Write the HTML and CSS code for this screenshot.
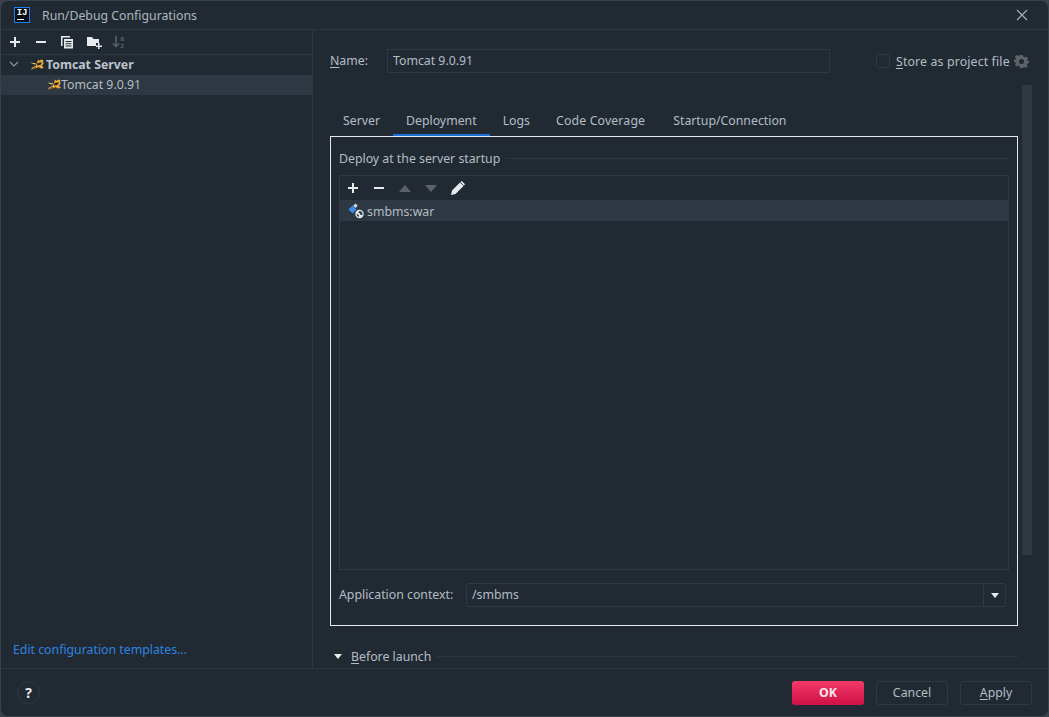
FILE: index.html
```html
<!DOCTYPE html>
<html lang="en">
<head>
<meta charset="utf-8">
<title>Run/Debug Configurations</title>
<link rel="stylesheet" href="styles.css">
</head>
<body>
<svg class="defs" width="0" height="0">
  <defs>
    <symbol id="cat" viewBox="0 0 14 11">
      <path fill="#e9a83c" d="M8 .5l1.500 1.300L11.500.5 13 1l.5 3.500-1.500 2.500 2 2-3 .5-2.500-1.500L6 9.500l-5 1 1-2 3.500-1.500 1.500-3z"/>
      <path fill="#23231a" d="M7.500 4l4.500-.7L10.500 6l-3.500.4zM1.500 9.500l4-1.300L7 9.500z"/>
      <path fill="#f4cb58" d="M0 3.500l6 .8-.8 1.500z"/>
    </symbol>
    <symbol id="plus" viewBox="0 0 12 12"><path fill="#e8ebee" d="M5 1h2v4h4v2H7v4H5V7H1V5h4z"/></symbol>
    <symbol id="minus" viewBox="0 0 12 12"><path fill="#e8ebee" d="M1 5h10v2H1z"/></symbol>
  </defs>
</svg>
<div class="window">
  <header class="titlebar">
    <span class="app-logo"><span class="logo-text">IJ</span><span class="logo-bar"></span></span>
    <span class="title">Run/Debug Configurations</span>
    <svg class="close" width="12" height="12" viewBox="0 0 12 12"><path d="M1 1l10 10M11 1L1 11" stroke="#a9b0b7" stroke-width="1.100" fill="none"/></svg>
  </header>
  <main class="main">
    <aside class="left">
      <div class="left-toolbar">
        <svg class="ico ico-add" width="12" height="12"><use href="#plus"/></svg>
        <svg class="ico" width="12" height="12"><use href="#minus"/></svg>
        <svg class="ico" width="14" height="14" viewBox="0 0 14 14"><path fill="#e8ebee" d="M1 1h9v1.500H2.500V11H1z"/><path fill="#e8ebee" fill-rule="evenodd" d="M4 4h9v9.500H4zm1.500 2v1H11.500V6zm0 2.200v1H11.500v-1zm0 2.200v1H11.500v-1z"/></svg>
        <svg class="ico ico-folder" width="15" height="14" viewBox="0 0 15 14"><path fill="#e8ebee" d="M0 2h5l1.500 2H12v4H9v3H0z"/><path fill="#e8ebee" d="M11 8h1.500v2.500H15V12h-2.500v2H11v-2H9v-1.500h2z"/></svg>
        <svg class="ico" width="14" height="14" viewBox="0 0 14 14"><path fill="#5c6268" d="M3.200 1h1.600v9l2-2 .9.900L4 12.500.3 8.900l.9-.9 2 2z"/><text class="az" x="8.500" y="6">a</text><text class="az" x="8.500" y="13">z</text></svg>
      </div>
      <div class="tree">
        <div class="tree-row tree-parent">
          <svg class="chev" width="10" height="6" viewBox="0 0 10 6"><path d="M1 1l4 4 4-4" stroke="#8a9097" stroke-width="1.200" fill="none"/></svg>
          <svg class="cat" width="14" height="11"><use href="#cat"/></svg>
          <span>Tomcat Server</span>
        </div>
        <div class="tree-row tree-child">
          <svg class="cat" width="14" height="11"><use href="#cat"/></svg>
          <span>Tomcat 9.0.91</span>
        </div>
      </div>
      <a class="templates">Edit configuration templates...</a>
    </aside>
    <section class="right">
      <div class="name-row">
        <label class="name-label"><u>N</u>ame:</label>
        <div class="name-field">Tomcat 9.0.91</div>
        <span class="checkbox"></span>
        <span class="store"><u>S</u>tore as project file</span>
        <svg class="gear" width="15" height="15" viewBox="0 0 15 15"><path fill="#5f6368" fill-rule="evenodd" d="M6 1h3l.4 1.800 1.300.6 1.600-1 1.800 2-1 1.500.5 1.300L15 6.500v2.500l-1.700.5-.5 1.300 1 1.500-1.800 1.800-1.600-1-1.300.6L9 14H6l-.4-1.800-1.300-.6-1.600 1L.9 10.800l1-1.500-.5-1.300L0 8.500V6l1.400-.5.500-1.300-1-1.500 1.800-1.800 1.600 1 1.300-.6zM7.500 5a2.500 2.500 0 1 0 0 5 2.500 2.500 0 0 0 0-5z"/></svg>
      </div>
      <div class="scrollbar"></div>
      <nav class="tabs">
        <span class="tab">Server</span>
        <span class="tab tab-active">Deployment</span>
        <span class="tab">Logs</span>
        <span class="tab tab-code">Code Coverage</span>
        <span class="tab">Startup/Connection</span>
      </nav>
      <div class="panel">
        <div class="group-title"><span>Deploy at the server startup</span><i class="rule"></i></div>
        <div class="table">
          <div class="table-toolbar">
            <svg class="ico" width="12" height="12"><use href="#plus"/></svg>
            <svg class="ico" width="12" height="12"><use href="#minus"/></svg>
            <svg class="ico" width="12" height="7" viewBox="0 0 12 7"><path fill="#5c6268" d="M6 0l6 7H0z"/></svg>
            <svg class="ico" width="12" height="7" viewBox="0 0 12 7"><path fill="#5c6268" d="M0 0h12L6 7z"/></svg>
            <svg class="ico" width="14" height="14" viewBox="0 0 14 14"><path fill="#e8ebee" d="M0 14l1-4.500L9 1.500l3.500 3.500L4.500 13zM10 .6l.8-.6L14 3.200l-.6.800-.6.400L9.500 1z"/></svg>
          </div>
          <div class="artifact">
            <svg class="artifact-ico" width="16" height="16" viewBox="0 0 16 16">
              <path fill="#3d8bec" d="M4.500 2.500L8.500 6.500 4.500 10.500 .5 6.500z"/>
              <path fill="#d5dade" d="M7.500 .5l2.200 2.200-2.200 2.200-2.200-2.200z"/>
              <circle cx="11.500" cy="11" r="4.200" fill="#e8ebee"/>
              <path fill="#2e3842" d="M11.500 8a3 3 0 0 1 2.700 4.300l-1.800-.6-.4-1.300-1.800-.9zM8.700 10.700l2.200 1.300v2A3 3 0 0 1 8.700 10.700z"/>
            </svg>
            <span>smbms:war</span>
          </div>
        </div>
        <div class="context-row">
          <label class="context-label">Application context:</label>
          <div class="combo">
            <span class="combo-value">/smbms</span>
            <span class="combo-btn"><i class="tri"></i></span>
          </div>
        </div>
      </div>
      <div class="before">
        <i class="tri before-tri"></i>
        <span class="before-label"><u>B</u>efore launch</span>
        <i class="rule"></i>
      </div>
    </section>
  </main>
  <footer class="footer">
    <span class="help">?</span>
    <div class="buttons">
      <button class="btn btn-ok">OK</button>
      <button class="btn">Cancel</button>
      <button class="btn"><u>A</u>pply</button>
    </div>
  </footer>
</div>
</body>
</html>
```
FILE: styles.css
```css
* { box-sizing: border-box; }
html, body { margin: 0; height: 100%; background: #3a424b; }
body { font-family: "Noto Sans", "Open Sans", sans-serif; font-size: 12.300px; color: #b4bcc4; overflow: hidden; }
.defs { position: absolute; }
u { text-underline-offset: 2px; }

.window { width: 1049px; height: 717px; display: flex; flex-direction: column; background: #212a33; border: 1px solid #39424b; border-radius: 8px; overflow: hidden; }

.titlebar { height: 29px; flex: none; display: flex; align-items: center; padding: 0 20px 0 13px; border-bottom: 1px solid #2d3740; }
.app-logo { width: 16px; height: 16px; border: 1px solid #1e80f0; background: #0c0f14; display: flex; flex-direction: column; align-items: center; margin-right: 12px; flex: none; }
.logo-text { font: bold 9px/9px "Liberation Mono", monospace; color: #fff; letter-spacing: -.2px; margin-top: 1px; }
.logo-bar { width: 7px; height: 1px; background: #fff; margin: 1px 3px 0 0; }
.title { flex: 1; color: #aeb6be; }
.close { flex: none; }

.main { flex: 1; min-height: 0; display: flex; }
.left { width: 312px; flex: none; display: flex; flex-direction: column; border-right: 1px solid #2d3740; }
.left-toolbar { height: 25px; display: flex; align-items: center; gap: 13px; padding: 0 8px; border-bottom: 1px solid #2d3740; }
.ico { flex: none; display: block; }
.ico-add { margin-right: 1px; }
.ico-folder { margin-right: -3px; }
.az { font: bold 6.500px "Liberation Sans", sans-serif; fill: #5c6268; }
.tree { flex: 1; }
.tree-row { height: 20px; display: flex; align-items: center; padding-bottom: 2px; }
.tree-parent { padding-left: 8px; font-weight: 700; color: #bcc4cc; }
.chev { margin-right: 11px; }
.tree-parent .cat { margin-right: 2px; }
.tree-child { background: #2e3842; padding-left: 46px; }
.templates { color: #2f83e0; padding: 0 0 10px 12px; }

.right { flex: 1; min-width: 0; position: relative; padding: 19px 31px 0 17px; display: flex; flex-direction: column; }
.name-row { height: 24px; display: flex; align-items: center; flex: none; }
.name-label { width: 57px; flex: none; padding-bottom: 1px; }
.name-field { width: 443px; height: 24px; border: 1px solid #2f3943; padding: 0 5px; line-height: 21px; flex: none; margin-right: 46px; }
.checkbox { width: 14px; height: 14px; border: 1px solid #2f3943; border-radius: 2px; margin-right: 6px; flex: none; }
.store { flex: none; width: 118px; letter-spacing: .15px; white-space: nowrap; }
.gear { flex: none; }
.scrollbar { position: absolute; left: 709px; top: 55px; width: 10px; height: 470px; background: #2e3842; }

.tabs { height: 32px; margin-top: 31px; display: flex; flex: none; align-items: stretch; }
.tab { padding: 8px 13px 0; white-space: nowrap; }
.tab-active { border-bottom: 2px solid #1e6fd9; }
.tab-code { letter-spacing: .15px; padding-right: 15px; }

.panel { width: 688px; height: 490px; flex: none; border: 1px solid #e6e8ea; padding: 11px 8px 0; display: flex; flex-direction: column; }
.group-title { display: flex; align-items: center; height: 20px; flex: none; }
.rule { flex: 1; height: 1px; background: #2d3740; margin-left: 6px; }
.table { width: 670px; height: 395px; margin-top: 7px; border: 1px solid #2f3943; flex: none; }
.table-toolbar { height: 24px; display: flex; align-items: center; gap: 14px; padding: 0 7px; }
.artifact { height: 21px; background: #2e3842; display: flex; align-items: center; padding: 1px 0 0 8px; gap: 3px; }
.artifact-ico { flex: none; }
.context-row { display: flex; align-items: center; margin-top: 13px; height: 24px; }
.context-label { width: 127px; flex: none; padding-bottom: 1px; }
.combo { width: 540px; height: 24px; border: 1px solid #2f3943; border-radius: 2px; display: flex; align-items: center; }
.combo-value { flex: 1; padding: 0 0 1px 5px; }
.combo-btn { width: 22px; height: 100%; border-left: 1px solid #2f3943; display: flex; align-items: center; justify-content: center; }
.tri { display: block; width: 0; height: 0; border-left: 4.500px solid transparent; border-right: 4.500px solid transparent; border-top: 5px solid #e8ebee; }

.before { display: flex; align-items: center; width: 688px; height: 20px; margin-top: 20px; flex: none; padding-left: 4px; }
.before-tri { margin-right: 9px; }

.footer { height: 48px; flex: none; border-top: 1px solid #2d3740; display: flex; align-items: center; justify-content: space-between; padding: 0 16px 0 16px; }
.help { width: 23px; height: 23px; border: 1px solid #2f3943; border-radius: 50%; display: flex; align-items: center; justify-content: center; color: #e8ebee; font-weight: 700; font-size: 14px; }
.buttons { display: flex; gap: 12px; }
.btn { width: 72px; height: 24px; border: 1px solid #2f3943; border-radius: 3px; background: transparent; color: #b4bcc4; font: inherit; padding: 0; }
.btn-ok { border: 0; background: linear-gradient(#f23a68, #d01048); color: #f4e8ec; font-weight: 700; }
```
